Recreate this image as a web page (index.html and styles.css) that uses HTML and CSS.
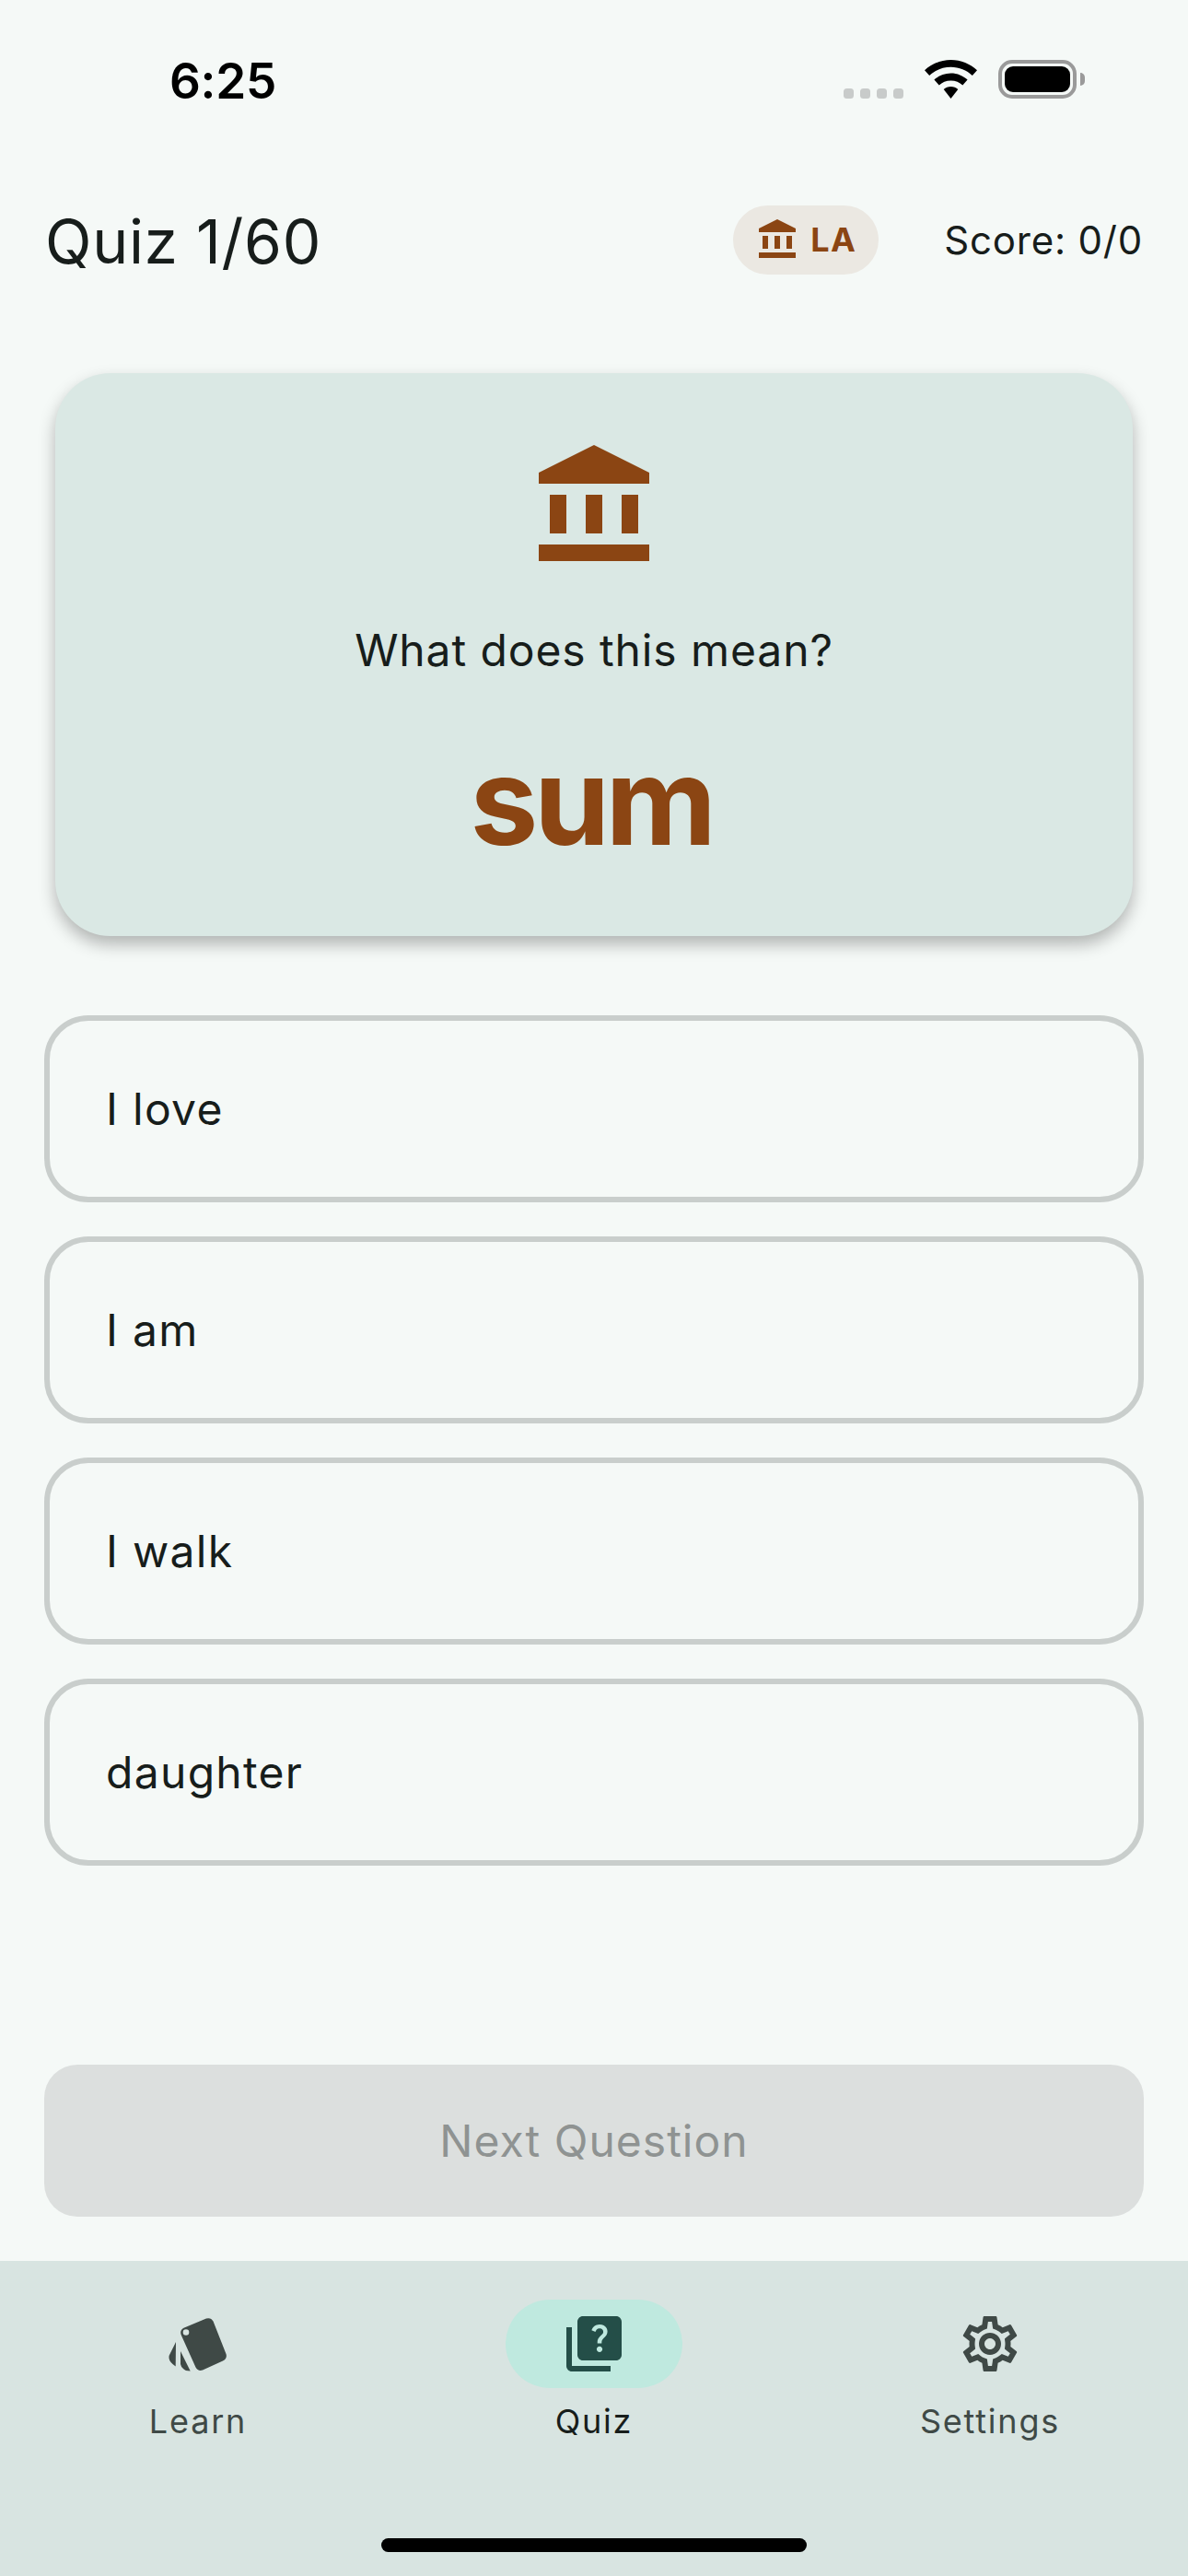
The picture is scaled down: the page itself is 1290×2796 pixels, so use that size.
FILE: index.html
```html
<!DOCTYPE html>
<html lang="en">
<head>
<meta charset="utf-8">
<title>Quiz</title>
<link rel="stylesheet" href="styles.css">
</head>
<body>
<div class="app">
  <div class="status">
    <span class="time">6:25</span>
    <div class="status-icons">
      <div class="dots"><i></i><i></i><i></i><i></i></div>
      <svg class="wifi" width="57" height="42" viewBox="0 0 57 42"><path d="M28.500 0C17.500 0 7.500 4.300 0 11.300L5.200 17C11.300 11.300 19.500 7.800 28.500 7.800S45.700 11.300 51.800 17L57 11.300C49.500 4.300 39.500 0 28.500 0Z"/><path d="M28.500 14.500C21.500 14.500 15.200 17.200 10.400 21.600L15.700 27.400C19 24.300 23.500 22.400 28.500 22.400S38 24.300 41.300 27.400L46.600 21.600C41.800 17.200 35.500 14.500 28.500 14.500Z"/><path d="M28.500 29C25.500 29 22.700 30.200 20.700 32.100L28.500 42L36.300 32.100C34.300 30.200 31.500 29 28.500 29Z"/></svg>
      <div class="battery"><div class="battery-fill"></div></div>
    </div>
  </div>
  <header class="header">
    <h1 class="title">Quiz 1/60</h1>
    <div class="header-right">
      <div class="badge">
        <svg class="badge-icon" width="48" height="48" viewBox="0 0 24 24"><path d="M4 10h3v7H4zM10.500 10h3v7h-3zM2 19h20v3H2zM17 10h3v7h-3zM12 1L2 6v2h20V6z"/></svg>
        <span class="badge-text">LA</span>
      </div>
      <span class="score">Score: 0/0</span>
    </div>
  </header>
  <main class="main">
    <section class="card">
      <svg class="card-icon" width="144" height="144" viewBox="0 0 24 24"><path d="M4 10h3v7H4zM10.500 10h3v7h-3zM2 19h20v3H2zM17 10h3v7h-3zM12 1L2 6v2h20V6z"/></svg>
      <p class="prompt">What does this mean?</p>
      <p class="word">sum</p>
    </section>
    <div class="options">
      <button class="option">I love</button>
      <button class="option">I am</button>
      <button class="option">I walk</button>
      <button class="option">daughter</button>
    </div>
    <button class="next">Next Question</button>
  </main>
  <nav class="nav">
    <div class="nav-items">
      <div class="nav-item">
        <div class="pill">
          <svg width="72" height="72" viewBox="0 0 72 72" class="nav-icon"><path fill-rule="evenodd" d="M18 27Q15.500 21.500 20.500 18.700L45 8.500Q50 7 52.500 11.500L66.500 47Q68 52 63 54.500L41 64.500Q36 66 33.500 61.500ZM23 20.200A3.300 3.300 0 1 0 23 26.800A3.300 3.300 0 1 0 23 20.200Z"/><path d="M12 34L11.700 60.500Q5 56 4.500 51.500Q4 49 5.500 47ZM17 44L27.700 65.500Q22 65.500 20 63Q17.500 61 17 58Z"/></svg>
        </div>
        <span class="nav-label">Learn</span>
      </div>
      <div class="nav-item active">
        <div class="pill">
          <svg width="72" height="72" viewBox="0 0 24 24" class="nav-icon"><path d="M4 6H2v14c0 1.100.9 2 2 2h14v-2H4V6zm16-4H8c-1.100 0-2 .9-2 2v12c0 1.100.9 2 2 2h12c1.100 0 2-.9 2-2V4c0-1.100-.9-2-2-2zm-5.990 13c-.59 0-1.050-.47-1.050-1.050 0-.59.47-1.040 1.050-1.040.59 0 1.040.45 1.040 1.040-.01.58-.45 1.050-1.040 1.050zm2.500-6.170c-.63.93-1.230 1.210-1.560 1.810-.13.24-.18.4-.18 1.180h-1.520c0-.41-.06-1.080.26-1.650.41-.73 1.180-1.160 1.630-1.800.48-.68.21-1.940-1.140-1.940-.88 0-1.320.67-1.500 1.230l-1.370-.57C11.510 5.960 12.520 5 13.990 5c1.230 0 2.080.56 2.510 1.260.37.61.58 1.730.01 2.570z"/></svg>
        </div>
        <span class="nav-label">Quiz</span>
      </div>
      <div class="nav-item">
        <div class="pill">
          <svg width="72" height="72" viewBox="0 0 24 24" class="nav-icon"><path d="M19.430 12.980c.04-.32.07-.64.07-.98 0-.34-.03-.66-.07-.98l2.110-1.650c.19-.15.24-.42.12-.64l-2-3.460c-.09-.16-.26-.25-.44-.25-.06 0-.12.01-.17.03l-2.490 1c-.52-.4-1.080-.73-1.690-.98l-.38-2.650C14.460 2.180 14.250 2 14 2h-4c-.25 0-.46.18-.49.42l-.38 2.650c-.61.25-1.170.59-1.690.98l-2.490-1c-.06-.02-.12-.03-.18-.03-.17 0-.34.09-.43.25l-2 3.460c-.13.22-.07.49.12.64l2.110 1.650c-.04.32-.07.65-.07.98 0 .33.03.66.07.98l-2.110 1.650c-.19.15-.24.42-.12.64l2 3.460c.09.16.26.25.44.25.06 0 .12-.01.17-.03l2.490-1c.52.4 1.080.73 1.690.98l.38 2.650c.03.24.24.42.49.42h4c.25 0 .46-.18.49-.42l.38-2.650c.61-.25 1.170-.59 1.690-.98l2.490 1c.06.02.12.03.18.03.17 0 .34-.09.43-.25l2-3.460c.12-.22.07-.49-.12-.64l-2.110-1.650zm-1.980-1.710c.04.31.05.52.05.73 0 .21-.02.43-.05.73l-.14 1.130.89.7 1.080.84-.7 1.210-1.270-.51-1.040-.42-.9.68c-.43.32-.84.56-1.250.73l-1.060.43-.16 1.130-.2 1.350h-1.400l-.19-1.350-.16-1.130-1.060-.43c-.43-.18-.83-.41-1.230-.71l-.91-.7-1.060.43-1.270.51-.7-1.210 1.080-.84.89-.7-.14-1.130c-.03-.31-.05-.54-.05-.74s.02-.43.05-.73l.14-1.130-.89-.7-1.080-.84.7-1.210 1.270.51 1.040.42.9-.68c.43-.32.84-.56 1.250-.73l1.060-.43.16-1.130.2-1.350h1.390l.19 1.350.16 1.130 1.060.43c.43.18.83.41 1.230.71l.91.7 1.060-.43 1.270-.51.7 1.210-1.070.85-.89.7.14 1.130zM12 8c-2.210 0-4 1.790-4 4s1.790 4 4 4 4-1.790 4-4-1.790-4-4-4zm0 6c-1.100 0-2-.9-2-2s.9-2 2-2 2 .9 2 2-.9 2-2 2z"/></svg>
        </div>
        <span class="nav-label">Settings</span>
      </div>
    </div>
    <div class="home-bar"></div>
  </nav>
</div>
</body>
</html>
```
FILE: styles.css
```css
* { box-sizing: border-box; }
html, body { margin: 0; padding: 0; }
body { font-family: "Inter", "Liberation Sans", sans-serif; color: #171d1b; background: #f5f9f7; }
.app { width: 1290px; height: 2796px; display: flex; flex-direction: column; overflow: hidden; background: #f5f9f7; }

.status { height: 160px; flex: none; display: flex; justify-content: space-between; align-items: flex-start; padding: 55px 121px 0 184px; }
.time { font-size: 53px; font-weight: 600; line-height: 66px; letter-spacing: -0.300px; color: #000; }
.status-icons { display: flex; align-items: flex-end; margin-top: 10px; height: 42px; }
.dots { display: flex; gap: 7px; margin-right: 23px; }
.dots i { display: block; width: 11px; height: 11px; border-radius: 3.500px; background: #c8cbca; }
.wifi { fill: #000; margin-right: 23px; }
.battery { position: relative; width: 85px; height: 42px; border: 4.500px solid #9a9a9a; border-radius: 15px; padding: 3px; }
.battery::after { content: ""; position: absolute; right: -13px; top: 9.500px; width: 5px; height: 14px; background: #9a9a9a; border-radius: 0 7px 7px 0; }
.battery-fill { width: 100%; height: 100%; background: #000; border-radius: 9px; }

.header { height: 200px; flex: none; display: flex; justify-content: space-between; align-items: center; padding: 3px 49px 0 49px; }
.title { margin: 0; font-size: 66px; font-weight: 400; line-height: 88px; letter-spacing: 0.700px; }
.header-right { display: flex; align-items: center; gap: 71px; margin-top: -3px; }
.badge { display: flex; align-items: center; height: 75px; width: 158px; border-radius: 38px; background: #ebe8e2; padding-left: 24px; gap: 12px; }
.badge-icon { fill: #8b4513; flex: none; }
.badge-text { font-size: 36px; font-weight: 700; letter-spacing: 1.500px; color: #8b4513; }
.score { font-size: 42px; font-weight: 400; letter-spacing: 0.800px; }

.main { flex: 1; display: flex; flex-direction: column; padding: 45px 48px 48px; }
.card { height: 611px; margin: 0 12px; border-radius: 60px; background: #dae8e4; box-shadow: 0 9px 18px rgba(0,0,0,.28); display: flex; flex-direction: column; align-items: center; padding-top: 72px; }
.card-icon { fill: #8b4513; flex: none; }
.prompt { margin: 49px 0 0; font-size: 48px; font-weight: 400; line-height: 72px; letter-spacing: 0.900px; }
.word { margin: 52px 6px 0 0; font-size: 132px; font-weight: 700; line-height: 150px; letter-spacing: -4.500px; color: #8b4513; }

.options { display: flex; flex-direction: column; gap: 37px; margin-top: 86px; }
.option { height: 203px; border: 6px solid #c9cecc; border-radius: 48px; background: transparent; text-align: left; padding: 0 61px; font-family: inherit; font-size: 48px; letter-spacing: 1.300px; color: #171d1b; }

.next { margin-top: auto; height: 165px; border: 0; border-radius: 36px; background: #dcdfde; color: #8f9392; font-family: inherit; font-size: 48px; font-weight: 400; letter-spacing: 1px; }

.nav { height: 342px; flex: none; background: #d8e4e1; display: flex; flex-direction: column; align-items: center; padding-top: 42px; }
.nav-items { display: flex; width: 100%; }
.nav-item { flex: 1; display: flex; flex-direction: column; align-items: center; gap: 12px; color: #3f4946; }
.pill { width: 192px; height: 96px; border-radius: 48px; display: flex; align-items: center; justify-content: center; }
.nav-icon { fill: #3f4946; }
.nav-label { font-size: 36px; font-weight: 400; line-height: 48px; letter-spacing: 1.800px; }
.active { color: #171d1b; }
.active .pill { background: #bfe9df; }
.active .nav-icon { fill: #244e48; }
.home-bar { margin-top: 103px; width: 462px; height: 15px; border-radius: 8px; background: #000; }
```
